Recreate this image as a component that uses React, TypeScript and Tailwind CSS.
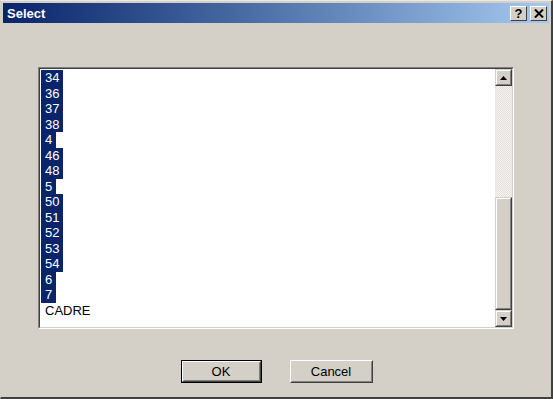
import React from "react";

const items = ["34", "36", "37", "38", "4", "46", "48", "5", "50", "51", "52", "53", "54", "6", "7"];

function TitleBtn({ children }: { children: React.ReactNode }) {
  return (
    <div className="w-[17px] h-[15px] bg-[#d4d0c8] border-t border-l border-t-white border-l-white border-r border-b border-r-[#404040] border-b-[#404040] flex items-center justify-center text-black text-[13px] font-bold leading-none">
      {children}
    </div>
  );
}

export default function App() {
  return (
    <div className="w-[553px] h-[399px] bg-[#d4d0c8] border-r-2 border-b-2 border-r-[#404040] border-b-[#404040] border-t border-l border-t-[#ece9e4] border-l-[#d4d0c8] flex flex-col overflow-hidden" style={{ fontFamily: '"Liberation Sans", Arial, sans-serif' }}>
      <div className="mx-[2px] mt-[2px] h-[20px] bg-gradient-to-r from-[#0a246a] to-[#a6caf0] flex items-center justify-between pl-[4px] pr-[2px]">
        <span className="text-white font-bold text-[13px] leading-none">Select</span>
        <div className="flex gap-[3px]">
          <TitleBtn>?</TitleBtn>
          <TitleBtn>
            <svg width="10" height="9" viewBox="0 0 10 9">
              <path d="M1 0.5 L9 8.5 M9 0.5 L1 8.5" stroke="#000" strokeWidth="2" />
            </svg>
          </TitleBtn>
        </div>
      </div>
      <div className="ml-[37px] mt-[44px] w-[476px] h-[262px] border border-t-[#808080] border-l-[#808080] border-r-white border-b-white">
        <div className="w-full h-full border border-t-[#404040] border-l-[#404040] border-r-[#d4d0c8] border-b-[#d4d0c8] bg-white flex">
          <div className="flex-1 pt-[1px] pl-[1px] flex flex-col text-[13px]">
            {items.map((it) => (
              <div key={it} className="h-[15.5px] flex">
                <span className="bg-[#0a246a] text-white px-[4px] leading-[15.5px]">{it}</span>
              </div>
            ))}
            <div className="h-[15.5px] flex">
              <span className="text-black px-[4px] leading-[15.5px]">CADRE</span>
            </div>
          </div>
          <div className="w-[17px] flex flex-col">
            <div className="h-[17px] bg-[#d4d0c8] border border-t-[#d4d0c8] border-l-[#d4d0c8] border-r-[#404040] border-b-[#404040]">
              <div className="w-full h-full border border-t-white border-l-white border-r-[#808080] border-b-[#808080] flex items-center justify-center">
                <svg width="7" height="4" viewBox="0 0 7 4"><path d="M3.5 0 L7 4 L0 4 Z" fill="#000" /></svg>
              </div>
            </div>
            <div className="h-[111px] bg-[repeating-conic-gradient(#e4e1dc_0_25%,#f4f3f1_0_50%)] bg-[length:2px_2px]" />
            <div className="flex-1 bg-[#d4d0c8] border border-t-[#d4d0c8] border-l-[#d4d0c8] border-r-[#404040] border-b-[#404040]">
              <div className="w-full h-full border border-t-white border-l-white border-r-[#808080] border-b-[#808080]" />
            </div>
            <div className="h-[17px] bg-[#d4d0c8] border border-t-[#d4d0c8] border-l-[#d4d0c8] border-r-[#404040] border-b-[#404040]">
              <div className="w-full h-full border border-t-white border-l-white border-r-[#808080] border-b-[#808080] flex items-center justify-center">
                <svg width="7" height="4" viewBox="0 0 7 4"><path d="M0 0 L7 0 L3.5 4 Z" fill="#000" /></svg>
              </div>
            </div>
          </div>
        </div>
      </div>
      <div className="mt-[31px] flex justify-center gap-[28px] pl-[1px]">
        <div className="w-[81px] h-[23px] border border-black">
          <div className="w-full h-full border border-t-white border-l-white border-r-[#404040] border-b-[#404040] bg-[#d4d0c8]">
            <div className="w-full h-full border border-t-[#d4d0c8] border-l-[#d4d0c8] border-r-[#808080] border-b-[#808080] flex items-center justify-center text-[13px] text-black">OK</div>
          </div>
        </div>
        <div className="w-[83px] h-[23px] border border-t-white border-l-white border-r-[#404040] border-b-[#404040] bg-[#d4d0c8]">
          <div className="w-full h-full border border-t-[#d4d0c8] border-l-[#d4d0c8] border-r-[#808080] border-b-[#808080] flex items-center justify-center text-[13px] text-black">Cancel</div>
        </div>
      </div>
    </div>
  );
}
